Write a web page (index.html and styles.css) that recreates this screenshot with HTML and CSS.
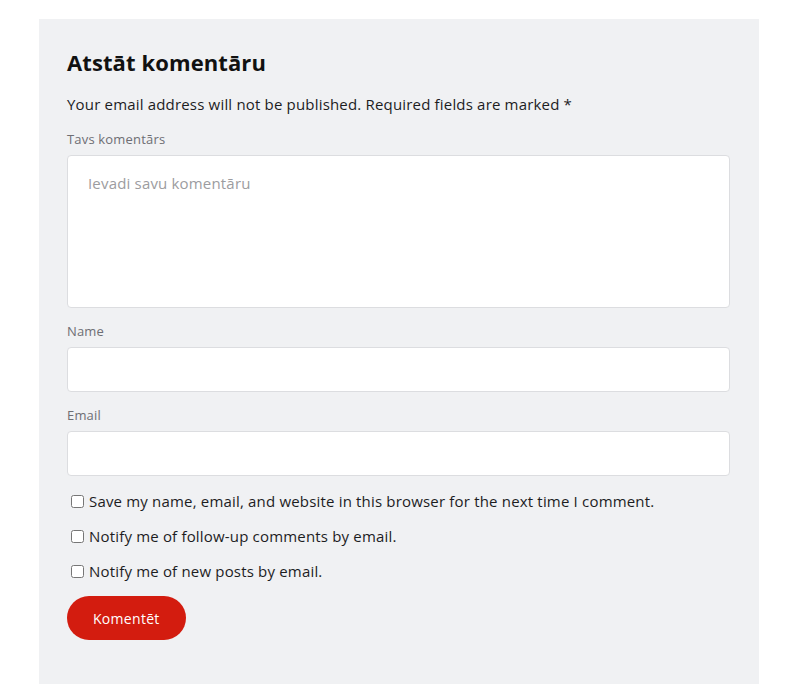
FILE: index.html
```html
<!DOCTYPE html>
<html lang="lv">
<head>
    <meta charset="UTF-8">
    <meta name="viewport" content="width=device-width, initial-scale=1.0">
    <title>Atstāt komentāru</title>
    <link rel="stylesheet" href="styles.css">
</head>
<body>

<div class="respond">
    <h3 class="reply-title">Atstāt komentāru</h3>
    <p class="notes">Your email address will not be published. Required fields are marked <span class="required">*</span></p>

    <form class="comment-form">
        <div class="field">
            <label for="comment">Tavs komentārs</label>
            <textarea id="comment" placeholder="Ievadi savu komentāru"></textarea>
        </div>
        <div class="field">
            <label for="author">Name</label>
            <input type="text" id="author">
        </div>
        <div class="field">
            <label for="email">Email</label>
            <input type="email" id="email">
        </div>

        <p class="check"><input type="checkbox" id="cookies"><label for="cookies">Save my name, email, and website in this browser for the next time I comment.</label></p>
        <p class="check"><input type="checkbox" id="sub-comments"><label for="sub-comments">Notify me of follow-up comments by email.</label></p>
        <p class="check"><input type="checkbox" id="sub-posts"><label for="sub-posts">Notify me of new posts by email.</label></p>

        <button type="button" class="button">Komentēt</button>
    </form>
</div>

</body>
</html>
```

FILE: styles.css
```css
body {
    background-color: #fff;
    color: #1d1d1f;
    font-family: "Open Sans", Arial, sans-serif;
    letter-spacing: 0.18px;
    margin: 0;
    padding: 19px 37px 16px 39px;
}

.respond {
    background-color: #f0f1f3;
    padding: 29px 29px 44px 28px;
}

.reply-title {
    font-size: 22px;
    font-weight: 700;
    margin: 0 0 17px;
    line-height: 28px;
    letter-spacing: 0.1px;
    color: #111;
}

.notes {
    font-size: 15px;
    line-height: 22px;
    margin: 0 0 15px;
}

.field {
    margin-bottom: 14px;
}

.field label {
    display: block;
    font-size: 13px;
    line-height: 18px;
    color: #6e6e73;
    margin-bottom: 7px;
}

.field textarea,
.field input {
    display: block;
    width: 100%;
    box-sizing: border-box;
    background: #fff;
    border: 1px solid #dcdde0;
    border-radius: 4px;
    font-family: inherit;
    font-size: 15px;
    letter-spacing: inherit;
}

.field textarea {
    height: 153px;
    padding: 17px 20px;
    resize: none;
}

.field textarea::placeholder {
    color: #9c9ca0;
}

.field input {
    height: 45px;
    margin-top: 1px;
    padding: 0 14px;
}

.check {
    display: flex;
    align-items: center;
    margin: 0 0 13px;
    font-size: 15px;
    line-height: 22px;
}

.comment-form .check:first-of-type {
    margin-top: 8px;
}

.check input {
    width: 13px;
    height: 13px;
    margin: 0 5px 0 4px;
}

.button {
    margin-top: 1px;
    background-color: #d31c0f;
    color: #fff;
    border: none;
    border-radius: 22px;
    height: 44px;
    padding: 0 26px;
    font-family: inherit;
    font-size: 14px;
    letter-spacing: 0.3px;
    cursor: pointer;
}
```
